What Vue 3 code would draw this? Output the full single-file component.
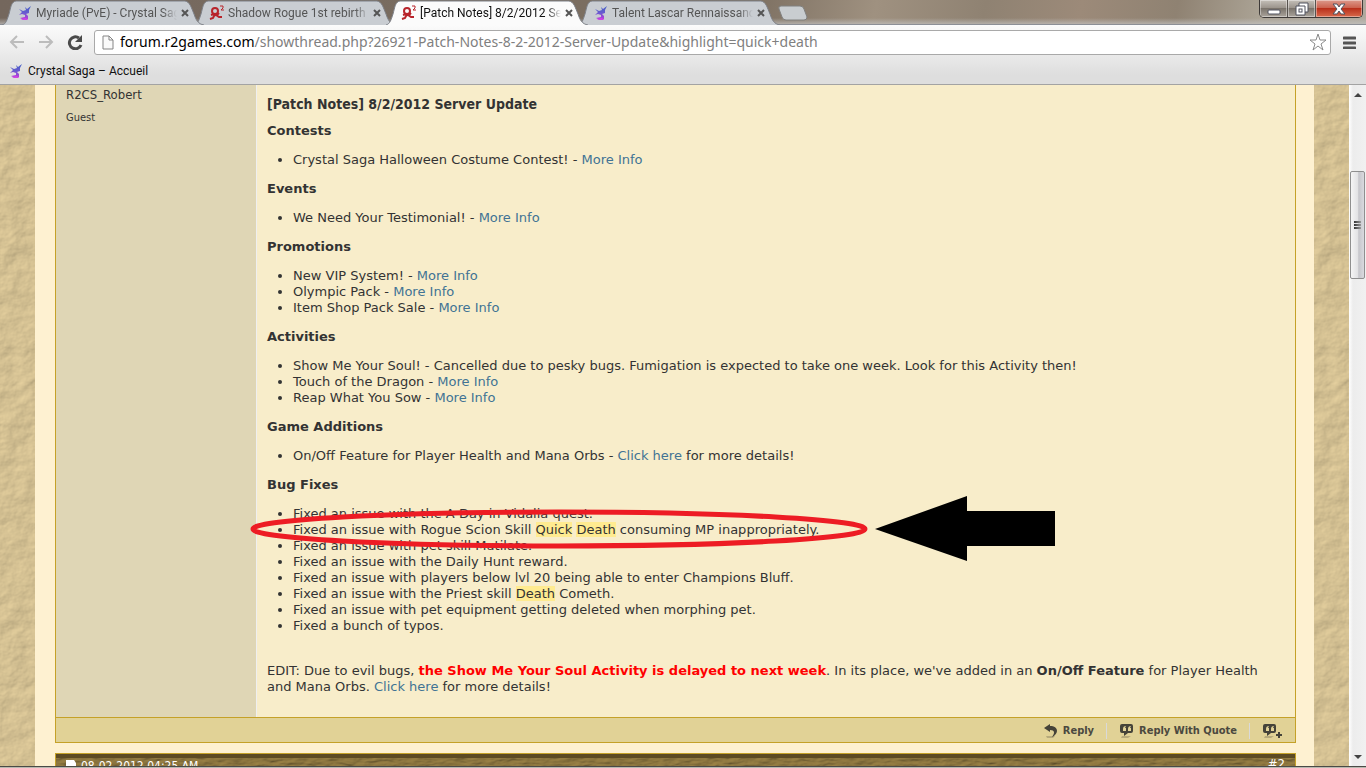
<script setup>
const tabs = [
  { title: 'Myriade (PvE) - Crystal Saga', icon: 'saga' },
  { title: 'Shadow Rogue 1st rebirth', icon: 'r2' },
  { title: '[Patch Notes] 8/2/2012 Server', icon: 'r2', active: true },
  { title: 'Talent Lascar Rennaissance', icon: 'saga' },
]

const text = (value) => ({ kind: 'text', value })
const link = (value) => ({ kind: 'link', value })
const hit = (value) => ({ kind: 'hit', value })

const sections = [
  { title: 'Contests', items: [[text('Crystal Saga Halloween Costume Contest! - '), link('More Info')]] },
  { title: 'Events', items: [[text('We Need Your Testimonial! - '), link('More Info')]] },
  {
    title: 'Promotions',
    items: [
      [text('New VIP System! - '), link('More Info')],
      [text('Olympic Pack - '), link('More Info')],
      [text('Item Shop Pack Sale - '), link('More Info')],
    ],
  },
  {
    title: 'Activities',
    items: [
      [text('Show Me Your Soul! - Cancelled due to pesky bugs. Fumigation is expected to take one week. Look for this Activity then!')],
      [text('Touch of the Dragon - '), link('More Info')],
      [text('Reap What You Sow - '), link('More Info')],
    ],
  },
  {
    title: 'Game Additions',
    items: [[text('On/Off Feature for Player Health and Mana Orbs - '), link('Click here'), text(' for more details!')]],
  },
  {
    title: 'Bug Fixes',
    items: [
      [text('Fixed an issue with the A Day in Vidalia quest.')],
      [text('Fixed an issue with Rogue Scion Skill '), hit('Quick'), text(' '), hit('Death'), text(' consuming MP inappropriately.')],
      [text('Fixed an issue with pet skill Mutilate.')],
      [text('Fixed an issue with the Daily Hunt reward.')],
      [text('Fixed an issue with players below lvl 20 being able to enter Champions Bluff.')],
      [text('Fixed an issue with the Priest skill '), hit('Death'), text(' Cometh.')],
      [text('Fixed an issue with pet equipment getting deleted when morphing pet.')],
      [text('Fixed a bunch of typos.')],
    ],
  },
]

const isCircled = (item) => item.some((part) => part.value === 'Quick')
</script>

<template>
  <div class="window">
    <svg class="defs" aria-hidden="true">
      <defs>
        <linearGradient id="sagaFill" x1="0" y1="0" x2="0" y2="1">
          <stop offset="0" stop-color="#3f5fc4" />
          <stop offset="0.5" stop-color="#6a5ad0" />
          <stop offset="1" stop-color="#c637dc" />
        </linearGradient>
        <filter id="leather" x="0" y="0" width="100%" height="100%" color-interpolation-filters="sRGB">
          <feTurbulence type="fractalNoise" baseFrequency="0.05 0.06" numOctaves="5" seed="8" />
          <feDiffuseLighting lighting-color="#d9c596" surfaceScale="1" diffuseConstant="1.1">
            <feDistantLight azimuth="225" elevation="62" />
          </feDiffuseLighting>
        </filter>
        <filter id="grain" x="0" y="0" width="100%" height="100%" color-interpolation-filters="sRGB">
          <feTurbulence type="fractalNoise" baseFrequency="0.08 0.3" numOctaves="3" seed="3" />
          <feDiffuseLighting lighting-color="#8f7840" surfaceScale="1" diffuseConstant="1.1">
            <feDistantLight azimuth="225" elevation="62" />
          </feDiffuseLighting>
        </filter>
        <symbol id="saga" viewBox="0 0 16 16">
          <path d="M2 4L6 6L9 5L8 2L10 4L14 1L12 5L12 8L9 9L11 11L11 14L7 15L3 13L8 12L8 10L5 9L2 10L5 7Z" fill="url(#sagaFill)" />
          <path d="M4 14L9 13L11 15L6 15Z" fill="#cf45e4" />
        </symbol>
        <symbol id="r2" viewBox="0 0 16 16">
          <g fill="none" stroke="#b8242b" stroke-width="2">
            <circle cx="6" cy="6" r="3" />
            <path d="M4 9L7 10L10 12L13 12M8 9L5 11L4 13L1 14" />
            <path d="M2 10L5 9M8 10L10 8" />
          </g>
          <path d="M11 1H14V3L12 5H15" fill="none" stroke="#b8242b" stroke-width="1" />
        </symbol>
        <symbol id="bubble" viewBox="0 0 16 16">
          <path d="M3 13H12L9 15H2Z" fill="#b7aa7b" />
          <path d="M3 1H12Q14 1 14 3V8Q14 10 12 10H9L5 13V10H3Q1 10 1 8V3Q1 1 3 1Z" fill="#454339" />
          <path d="M7 3Q4 3 4 6V8H7V5H6M12 3Q9 3 9 6V8H12V5H11" fill="#e1d296" />
        </symbol>
      </defs>
    </svg>

    <header class="chrome">
      <div class="titlebar">
        <div class="tabs">
          <div v-for="(tab, i) in tabs" :key="i" class="tab" :class="['t' + i, { active: tab.active }]">
            <svg class="tab-shape" viewBox="0 0 202 25" aria-hidden="true">
              <path d="M0 25C4 24 5 20 7 14C9 7 9 2 14 1H183C188 2 189 7 192 14C194 20 196 24 202 25" />
            </svg>
            <svg class="fav" aria-hidden="true"><use :href="'#' + tab.icon" /></svg>
            <span class="tab-title">{{ tab.title }}</span>
            <button class="tab-close" aria-label="Close tab">
              <svg viewBox="0 0 8 8" width="8" height="8"><path d="M1 1L7 7M7 1L1 7" /></svg>
            </button>
          </div>
          <button class="new-tab" aria-label="New tab">
            <svg viewBox="0 0 32 16" width="32" height="16">
              <path d="M4 1H23Q26 1 27 4L30 12Q30 15 27 15H9Q6 15 5 12L2 4Q1 1 4 1Z" />
            </svg>
          </button>
        </div>
        <div class="controls">
          <button aria-label="Minimize">
            <svg viewBox="0 0 14 14" width="14" height="14"><rect x="1" y="8" width="12" height="4" rx="1" fill="#fff" stroke="#50535f" /></svg>
          </button>
          <button aria-label="Restore">
            <svg viewBox="0 0 14 14" width="14" height="14">
              <path d="M4 1H13V10H10V13H1V4H4Z" fill="#fff" stroke="#50535f" />
              <path d="M4 4H10V10" fill="none" stroke="#50535f" />
              <rect x="4" y="7" width="3" height="3" fill="#fff" stroke="#50535f" />
            </svg>
          </button>
          <button class="close" aria-label="Close">
            <svg viewBox="0 0 14 12" width="14" height="12"><path d="M1 1H5L7 4L9 1H13L9 6L13 11H9L7 8L5 11H1L5 6Z" fill="#fff" stroke="#50535f" /></svg>
          </button>
        </div>
      </div>

      <div class="toolbar">
        <button class="nav" aria-label="Back">
          <svg viewBox="0 0 16 14" width="16" height="14"><path d="M15 7H2M8 1L2 7L8 13" fill="none" stroke="#bcbcbc" stroke-width="2" /></svg>
        </button>
        <button class="nav" aria-label="Forward">
          <svg viewBox="0 0 16 14" width="16" height="14"><path d="M1 7H14M8 1L14 7L8 13" fill="none" stroke="#bcbcbc" stroke-width="2" /></svg>
        </button>
        <button class="nav" aria-label="Reload">
          <svg viewBox="0 0 16 16" width="16" height="16">
            <path d="M12 4A6 6 0 1 0 14 11" fill="none" stroke="#4a4a4a" stroke-width="3" />
            <path d="M15 1V8H8Z" fill="#4a4a4a" />
          </svg>
        </button>
        <div class="omnibox">
          <svg class="page" viewBox="0 0 12 15" width="12" height="15"><path d="M1 1H7L11 5V14H1ZM7 1V5H11" fill="#fafafa" stroke="#858585" /></svg>
          <div class="url" role="textbox" aria-label="Address" tabindex="0"><b>forum.r2games.com</b>/showthread.php?26921-Patch-Notes-8-2-2012-Server-Update&amp;highlight=quick+death</div>
          <button aria-label="Bookmark this page">
            <svg viewBox="0 0 18 18" width="18" height="18"><path d="M9 1L11 7H17L12 11L14 17L9 13L4 17L6 11L1 7H7Z" fill="#fff" stroke="#8a8a8a" stroke-linejoin="round" /></svg>
          </button>
        </div>
        <button class="menu" aria-label="Menu">
          <svg viewBox="0 0 13 13" width="13" height="13"><path d="M1 2H12M1 7H12M1 12H12" stroke="#555" stroke-width="3" stroke-linecap="round" /></svg>
        </button>
      </div>

      <nav class="bookmarks">
        <a href="#"><svg class="fav" aria-hidden="true"><use href="#saga" /></svg>Crystal Saga – Accueil</a>
      </nav>
    </header>

    <div class="viewport">
      <svg class="side" aria-hidden="true"><rect width="100%" height="100%" filter="url(#leather)" /></svg>
      <main class="page-body">
        <article class="post">
          <div class="columns">
            <aside class="user">
              <div class="name">R2CS_Robert</div>
              <div class="rank">Guest</div>
            </aside>
            <div class="content">
              <h2>[Patch Notes] 8/2/2012 Server Update</h2>
              <template v-for="section in sections" :key="section.title">
                <h3>{{ section.title }}</h3>
                <ul>
                  <li v-for="(item, i) in section.items" :key="i" :class="{ circled: isCircled(item) }">
                    <template v-for="(part, j) in item" :key="j">
                      <a v-if="part.kind === 'link'" href="#">{{ part.value }}</a>
                      <mark v-else-if="part.kind === 'hit'">{{ part.value }}</mark>
                      <template v-else>{{ part.value }}</template>
                    </template>
                    <svg v-if="isCircled(item)" class="annotation" viewBox="0 0 810 70" width="810" height="70" aria-hidden="true">
                      <ellipse cx="309" cy="33" rx="306" ry="17" fill="none" stroke="#ed1c24" stroke-width="5" />
                      <path d="M625 33L717 0V15H805V50H717V65Z" fill="#000" />
                    </svg>
                  </li>
                </ul>
              </template>
              <p>EDIT: Due to evil bugs, <strong class="alert">the Show Me Your Soul Activity is delayed to next week</strong>. In its place, we've added in an <strong>On/Off Feature</strong> for Player Health and Mana Orbs. <a href="#">Click here</a> for more details!</p>
            </div>
          </div>
          <footer class="actions">
            <a href="#">
              <svg viewBox="0 0 16 16" width="16" height="16">
                <path d="M3 13H12L10 15H4Z" fill="#b7aa7b" />
                <path d="M1 5L7 1V3C16 3 16 11 9 14C12 10 12 7 7 7V9Z" fill="#454339" />
              </svg>Reply
            </a>
            <a href="#"><svg width="16" height="16" aria-hidden="true"><use href="#bubble" /></svg>Reply With Quote</a>
            <a href="#" class="multi" aria-label="Multi-quote">
              <svg viewBox="0 0 22 16" width="22" height="16">
                <use href="#bubble" width="16" height="16" />
                <path d="M14 12H20M17 9V15" stroke="#454339" stroke-width="2" />
              </svg>
            </a>
          </footer>
        </article>

        <article class="post next">
          <svg class="wood" aria-hidden="true"><rect width="100%" height="100%" filter="url(#grain)" /></svg>
          <div class="post-head">
            <span class="date"><svg viewBox="0 0 10 12" width="10" height="12"><path d="M0 0H8L10 3V12H0Z" fill="#fff" /></svg>08-02-2012 04:25 AM</span>
            <a href="#">#2</a>
          </div>
        </article>
      </main>
      <svg class="side" aria-hidden="true"><rect width="100%" height="100%" filter="url(#leather)" /></svg>
      <div class="scrollbar">
        <svg viewBox="0 0 8 4" width="8" height="4"><path d="M0 4L4 0L8 4Z" fill="#444" /></svg>
        <div class="track"><div class="thumb"><i></i><i></i><i></i></div></div>
        <svg viewBox="0 0 8 4" width="8" height="4"><path d="M0 0L4 4L8 0Z" fill="#444" /></svg>
      </div>
    </div>
    <div class="taskbar-edge"></div>
  </div>
</template>

<style>
html, body { margin: 0; overflow: hidden; }
</style>

<style scoped>
* { box-sizing: border-box; }
button { padding: 0; border: 0; background: none; display: flex; align-items: center; justify-content: center; }
a { color: #417394; text-decoration: none; }
svg { flex: none; display: block; }
.defs { position: absolute; width: 0; height: 0; }
.window { height: 100vh; display: flex; flex-direction: column; overflow: hidden; font-family: "DejaVu Sans", Verdana, sans-serif; font-size: 13px; line-height: 16px; color: #333; }

.chrome { flex: none; font-family: Roboto, "Segoe UI", sans-serif; font-size: 12px; background: linear-gradient(#fbfbfb 25px, #dedede 75px); border-bottom: 1px solid #a3a3a3; }
.titlebar { height: 25px; display: flex; justify-content: space-between; align-items: flex-start; background: linear-gradient(#ffffff00 18px, #c4c4c4aa 24px), linear-gradient(100deg, #74675d, #7d7062 55%, #9f9180 64%, #8f8272 72%, #9c8a79 79%, #8f8272 86%, #aaa294 92%, #b0a99d); border-bottom: 1px solid #8c8f96; }
.tabs { display: flex; height: 25px; padding-left: 2px; }
.tab { position: relative; width: 202px; height: 25px; margin-right: -10px; display: flex; align-items: center; padding: 1px 11px 0 15px; color: #555; }
.t0 { z-index: 3; }
.t1 { z-index: 2; }
.t2 { z-index: 4; }
.t3 { z-index: 1; }
.tab-shape { position: absolute; inset: 0; width: 100%; height: 100%; }
.tab-shape path { fill: #c9cdd2; stroke: #7d8087; }
.tab.active { color: #111; }
.tab.active .tab-shape path { fill: #fbfbfb; }
.fav { width: 16px; height: 16px; }
.tab .fav, .tab-title, .tab-close { position: relative; }
.tab-title { flex: 1; min-width: 0; margin-left: 3px; overflow: hidden; white-space: nowrap; mask-image: linear-gradient(90deg, #000 90%, transparent); }
.tab-close { width: 16px; height: 16px; }
.tab-close path { stroke: #555; stroke-width: 2; }
.new-tab { margin: 5px 0 0 7px; height: 16px; }
.new-tab path { fill: #c9cdd0; stroke: #80807f; }
.controls { display: flex; margin-right: 3px; border: 1px solid #3e3a38; border-top: 0; border-radius: 0 0 5px 5px; overflow: hidden; }
.controls button { width: 28px; height: 17px; background: linear-gradient(#c5c0b9, #9c958d 45%, #7b746c 50%, #aaa49b); border-right: 1px solid #57524d; box-shadow: inset 0 0 0 1px #ffffff66; }
.controls .close { width: 46px; border: 0; background: linear-gradient(#dc9a8c, #cc6350 45%, #b9301b 50%, #d8694b); }

.toolbar { display: flex; align-items: center; height: 34px; padding: 0 10px 0 9px; }
.nav { width: 16px; height: 24px; margin-right: 13px; }
.nav + .nav + .nav { margin-right: 11px; }
.omnibox { flex: 1; min-width: 0; display: flex; align-items: center; height: 25px; background: #fff; border: 1px solid #a9a9a9; border-radius: 3px; padding: 0 3px 0 7px; }
.url { flex: 1; min-width: 0; margin-left: 6px; overflow: hidden; white-space: nowrap; font-size: 14px; line-height: 20px; color: #808080; font-family: "Noto Sans", "Segoe UI", sans-serif; }
.url b { font-weight: 400; color: #000; }
.menu { margin-left: 12px; }
.bookmarks { height: 25px; padding: 0 8px 2px; display: flex; align-items: center; }
.bookmarks a { display: flex; align-items: center; gap: 4px; color: #111; }

.viewport { flex: 1; min-height: 0; display: flex; background: #fef1d1; overflow: hidden; }
.side { width: 35px; height: 100%; }
.page-body { flex: 1; min-width: 0; padding: 0 18px 0 20px; }
.post { border: 1px solid #c5a128; border-top: 0; }
.columns { display: flex; background: #f8edca; }
.user { flex: none; width: 200px; padding: 1px 10px; background: #dfd6b5; font-family: "DejaVu Sans Condensed", "DejaVu Sans", Tahoma, sans-serif; }
.name { line-height: 18px; }
.rank { font-size: 11px; margin-top: 6px; }
.content { flex: 1; min-width: 0; padding: 11px 10px 22px; border-left: 1px solid #efefef; }
h2 { margin: 0 0 11px; font: bold 14px/16px "DejaVu Sans Condensed", "DejaVu Sans", Tahoma, sans-serif; }
h3 { margin: 0; font-size: 13px; line-height: 16px; }
ul { margin: 13px 0; padding-left: 26px; }
.circled { position: relative; }
.annotation { position: absolute; left: -43px; top: -26px; pointer-events: none; }
mark { background: #ffeb90; color: inherit; }
p { margin: 29px 0 0; }
.alert { color: #f00; }
.actions { display: flex; justify-content: flex-end; align-items: center; height: 25px; padding: 2px 11px 0 0; background: #e1d296; border-top: 1px solid #c5a128; font: bold 11px/16px "DejaVu Sans Condensed", "DejaVu Sans", Tahoma, sans-serif; }
.actions a { display: flex; align-items: center; gap: 4px; color: #4b493f; padding: 0 12px; border-right: 1px solid #d9d9d9; line-height: 14px; }
.actions .multi { padding-right: 0; border: 0; }
.next { position: relative; margin-top: 10px; border-top: 1px solid #c5a128; height: 30px; overflow: hidden; }
.wood { position: absolute; inset: 0; width: 100%; height: 100%; }
.post-head { position: relative; display: flex; justify-content: space-between; padding: 0 10px; border-top: 4px solid #5c4a23; color: #fff; font-size: 12px; font-family: "DejaVu Sans Condensed", "DejaVu Sans", sans-serif; }
.post-head a { color: #fff; font-size: 13px; line-height: 12px; }
.date { display: flex; gap: 5px; align-items: center; }

.scrollbar { width: 17px; display: flex; flex-direction: column; align-items: center; padding: 8px 0 7px; background: linear-gradient(90deg, #fff, #ececec 4px, #f1f1f1); }
.track { flex: 1; width: 100%; padding: 74px 0 0 1px; }
.thumb { height: 108px; width: 15px; border: 1px solid #8f8f8f; border-radius: 2px; background: linear-gradient(90deg, #f5f5f5, #e3e3e5 50%, #c6c6cb 60%, #dadadf); display: flex; flex-direction: column; align-items: center; justify-content: center; gap: 1px; }
.thumb i { width: 7px; height: 2px; background: linear-gradient(90deg, #333, #999); }
.taskbar-edge { flex: none; height: 2px; background: linear-gradient(#4a4a46 1px, #b9b9b0 1px); }
</style>
